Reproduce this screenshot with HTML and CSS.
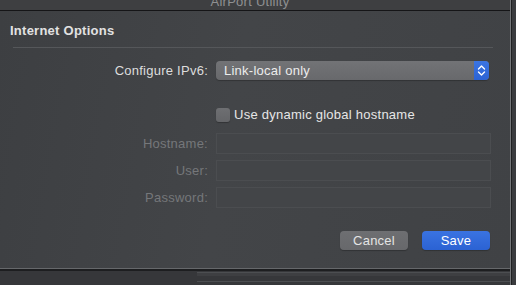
FILE: index.html
```html
<!DOCTYPE html>
<html lang="en">
<head>
    <meta charset="UTF-8">
    <title>Internet Options</title>
    <link rel="stylesheet" href="styles.css">
</head>
<body>
    <div class="screen">
        <div class="main">
            <div class="titlebar"><span class="title-text">AirPort Utility</span></div>

            <div class="sheet">
                <h2 class="sheet-title">Internet Options</h2>
                <div class="separator"></div>

                <div class="row row-popup">
                    <label class="label">Configure IPv6:</label>
                    <div class="popup">
                        <span class="popup-text">Link-local only</span>
                        <span class="stepper">
                            <svg width="15" height="19" viewBox="0 0 15 19">
                                <path d="M4.5 8 L7.5 5 L10.5 8" fill="none" stroke="#fff" stroke-width="1.4" stroke-linecap="round" stroke-linejoin="round"/>
                                <path d="M4.5 11 L7.5 14 L10.5 11" fill="none" stroke="#fff" stroke-width="1.4" stroke-linecap="round" stroke-linejoin="round"/>
                            </svg>
                        </span>
                    </div>
                </div>

                <div class="row row-check">
                    <span class="label"></span>
                    <span class="checkbox"></span>
                    <span class="check-text">Use dynamic global hostname</span>
                </div>

                <div class="row row-field first">
                    <label class="label disabled">Hostname:</label>
                    <div class="field"></div>
                </div>
                <div class="row row-field">
                    <label class="label disabled">User:</label>
                    <div class="field"></div>
                </div>
                <div class="row row-field">
                    <label class="label disabled">Password:</label>
                    <div class="field"></div>
                </div>

                <div class="buttons">
                    <button class="btn btn-cancel">Cancel</button>
                    <button class="btn btn-save">Save</button>
                </div>
            </div>

            <div class="below">
                <div class="below-panel"></div>
            </div>
        </div>
        <div class="edge"></div>
    </div>
</body>
</html>
```

FILE: styles.css
```css
body {
    margin: 0;
    padding: 0;
    background-color: #37383b;
    font-family: 'Liberation Sans', Arial, sans-serif;
    font-size: 13px;
    letter-spacing: 0.25px;
    overflow: hidden;
}
.screen {
    display: flex;
    width: 516px;
    height: 285px;
}
.main {
    width: 510px;
    display: flex;
    flex-direction: column;
}
.edge {
    flex: 1;
    border-left: 1px solid #75777a;
    box-shadow: inset 1px 0 0 #1f2022;
    background-color: #3a3b3e;
}
.titlebar {
    height: 10px;
    overflow: hidden;
    background-color: #3e3f41;
    border-bottom: 1px solid #151517;
    text-align: center;
    padding-right: 10px;
}
.title-text {
    display: block;
    margin-top: -6px;
    line-height: 15px;
    font-size: 13px;
    color: #8f9092;
}
.sheet {
    height: 257px;
    display: flex;
    flex-direction: column;
    background: linear-gradient(100deg, #3d3f42 0%, #434548 45%, #404245 100%);
    border-bottom: 1px solid #66686b;
}
.sheet-title {
    margin: 12px 0 0 10px;
    font-size: 13px;
    line-height: 16px;
    font-weight: bold;
    color: #e2e2e2;
}
.separator {
    height: 1px;
    margin: 8px 17px 0 13px;
    background-color: #55575a;
}
.row {
    display: flex;
    align-items: center;
}
.label {
    width: 208px;
    margin-right: 8px;
    text-align: right;
    color: #dddddd;
    flex-shrink: 0;
}
.label.disabled {
    color: #75777a;
}
.row-popup {
    margin-top: 13px;
    height: 19px;
}
.popup {
    width: 273px;
    height: 19px;
    display: flex;
    align-items: center;
    border-radius: 4px;
    background: linear-gradient(#727376, #68696c);
    box-shadow: 0 1px 1px rgba(0, 0, 0, 0.25);
}
.popup-text {
    flex: 1;
    padding-left: 8px;
    color: #ececec;
}
.stepper {
    width: 15px;
    height: 19px;
    display: flex;
    border-radius: 0 4px 4px 0;
    background: linear-gradient(#3b75e3, #2c63d4);
}
.row-check {
    margin-top: 27px;
    height: 15px;
}
.checkbox {
    width: 14px;
    height: 14px;
    border-radius: 3px;
    background: linear-gradient(#6e6f72, #646568);
    box-shadow: 0 1px 1px rgba(0, 0, 0, 0.25);
}
.check-text {
    margin-left: 4px;
    color: #e6e6e6;
}
.row-field {
    height: 21px;
    margin-top: 6px;
}
.row-field.first {
    margin-top: 11px;
}
.field {
    width: 273px;
    height: 19px;
    border: 1px solid #4b4d50;
    background-color: #434548;
}
.buttons {
    display: flex;
    justify-content: flex-end;
    gap: 14px;
    margin-top: 23px;
    padding-right: 20px;
}
.btn {
    width: 68px;
    height: 19px;
    padding: 0;
    border: none;
    border-radius: 4px;
    font-family: 'Liberation Sans', Arial, sans-serif;
    font-size: 13px;
    letter-spacing: 0.25px;
    box-shadow: 0 1px 1px rgba(0, 0, 0, 0.25);
}
.btn-cancel {
    background: linear-gradient(#6e6f72, #67686b);
    color: #e4e4e4;
}
.btn-save {
    background: linear-gradient(#3a73e1, #2b62d3);
    color: #ffffff;
}
.below {
    flex: 1;
    border-top: 2px solid #1d1e20;
    background-color: #36373a;
}
.below-panel {
    margin: 1px 0 0 197px;
    height: 8px;
    border-top: 1px solid #4c4e51;
    border-bottom: 1px solid #4c4e51;
    box-shadow: inset 0 3px 0 #3e3f42;
}
```
